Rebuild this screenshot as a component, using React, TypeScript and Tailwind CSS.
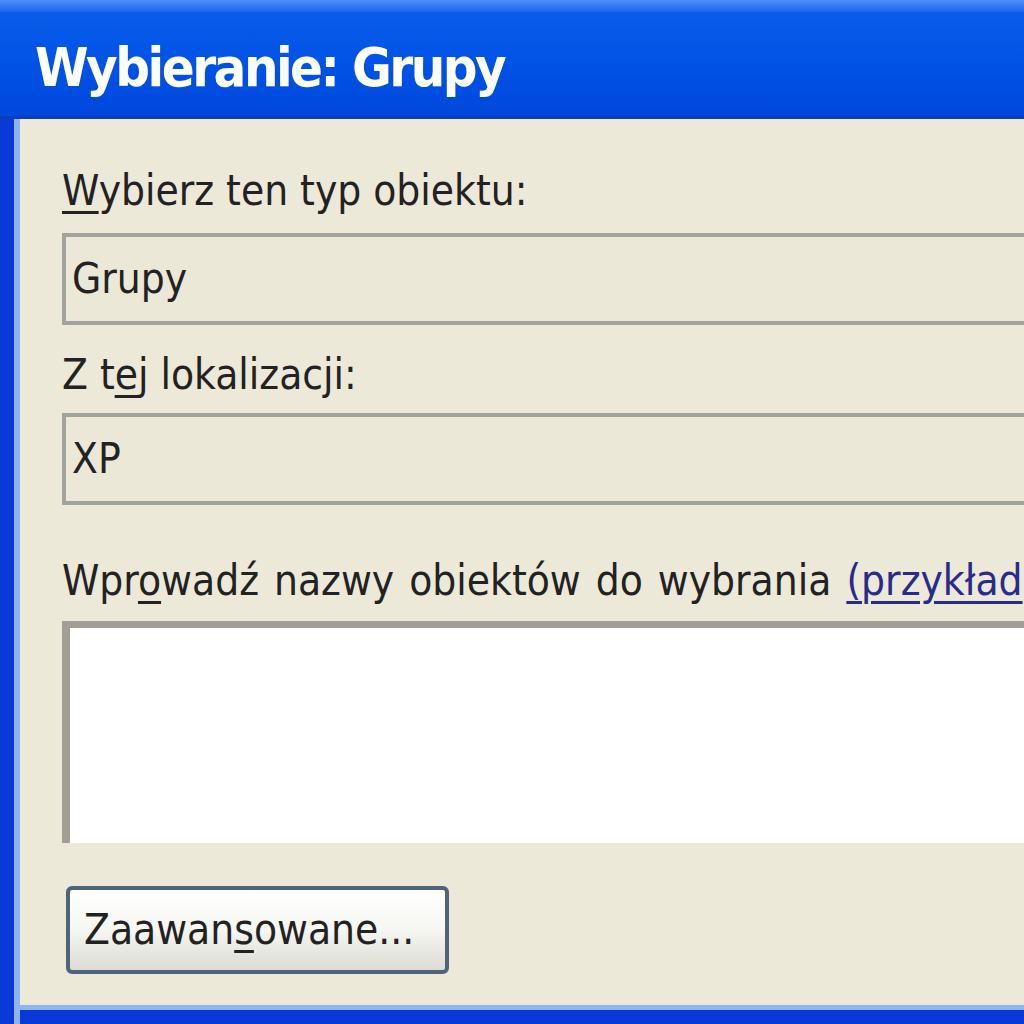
import React from 'react';

const font = { fontFamily: '"DejaVu Sans Condensed", "Liberation Sans", sans-serif' };

const Field: React.FC<{ value: string }> = ({ value }) => (
  <div className="h-[92px] border-t-[4px] border-b-[4px] border-l-[4px] border-[#a0a49c] bg-[#ebe8d8] flex items-center pl-[6px] text-[42px] text-[#222]">
    {value}
  </div>
);

const App: React.FC = () => {
  return (
    <div className="w-[1024px] h-[1024px] overflow-hidden flex flex-col bg-[#0842d8]" style={font}>
      {/* title bar */}
      <div className="h-[119px] flex flex-col">
        <div className="h-[12px] bg-gradient-to-b from-[#4f8ff7] to-[#1a64ee]" />
        <div className="flex-1 flex items-center pl-[35px] pt-[6px] bg-gradient-to-b from-[#0a5ce9] via-[#0053e6] to-[#0047dc] border-b-[3px] border-[#0b3fb8]">
          <span className="text-white font-bold text-[54px] tracking-[-2.5px]">
            Wybieranie: Grupy
          </span>
        </div>
      </div>

      {/* body */}
      <div className="flex-1 flex">
        <div className="w-[14px] bg-[#0a3ad6]" />
        <div className="w-[6px] bg-[#8fb4f4]" />
        <div className="flex-1 flex flex-col">
          <div className="flex-1 bg-[#ece9d8] pl-[42px] pt-[44px] flex flex-col text-[#222] text-[42px] leading-[56px]">
            <div className="mb-[14px]">
              <span className="underline decoration-[3px] underline-offset-[6px]">W</span>ybierz ten typ obiektu:
            </div>
            <Field value="Grupy" />
            <div className="mt-[22px] mb-[10px]">
              Z t<span className="underline decoration-[3px] underline-offset-[6px]">e</span>j lokalizacji:
            </div>
            <Field value="XP" />
            <div className="mt-[48px] mb-[12px] whitespace-nowrap [word-spacing:3px]">
              Wpr<span className="underline decoration-[3px] underline-offset-[6px]">o</span>wadź nazwy obiektów do wybrania{' '}
              <span className="text-[#2a2a8c] underline decoration-[3px] underline-offset-[6px]">(przykład</span>
            </div>
            <div className="h-[222px] bg-white border-t-[7px] border-l-[8px] border-[#a29e96]" />
            <div className="mt-[43px]">
              <button className="w-[383px] h-[88px] ml-[4px] rounded-[6px] border-[4px] border-[#4f6478] bg-gradient-to-b from-[#ffffff] via-[#f6f6f2] to-[#dcdcd4] text-left pl-[14px] text-[42px] text-[#222]">
                Zaawan<span className="underline decoration-[3px] underline-offset-[6px]">s</span>owane...
              </button>
            </div>
          </div>
          <div className="h-[5px] bg-[#8fb4f4]" />
          <div className="h-[14px] bg-[#0a3ad6]" />
        </div>
      </div>
    </div>
  );
};

export default App;
